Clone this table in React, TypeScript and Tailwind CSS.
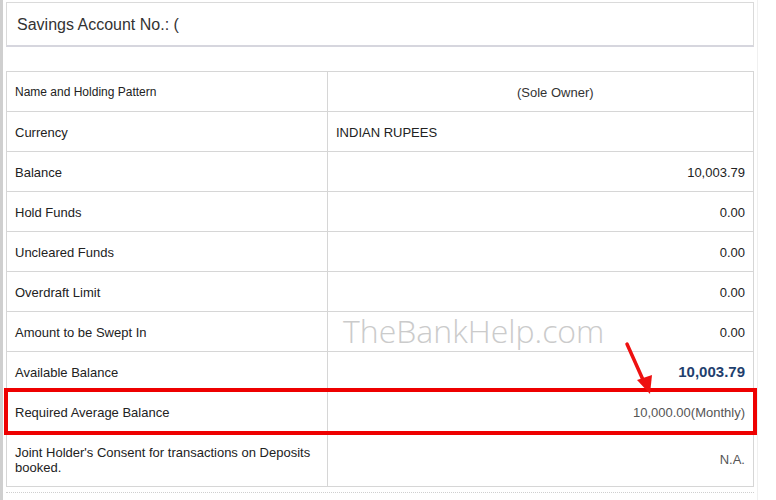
import React from 'react';

type Row = {
  label: string;
  value: React.ReactNode;
  align?: 'left' | 'right';
  small?: boolean;
  tall?: boolean;
};

const rows: Row[] = [
  {
    label: 'Name and Holding Pattern',
    small: true,
    align: 'left',
    value: <span className="pl-[181px] text-[13px] text-[#333]">(Sole Owner)</span>,
  },
  { label: 'Currency', align: 'left', value: <span className="text-[13px] text-[#222]">INDIAN RUPEES</span> },
  { label: 'Balance', value: <span className="text-[13px] text-[#222]">10,003.79</span> },
  { label: 'Hold Funds', value: <span className="text-[13px] text-[#222]">0.00</span> },
  { label: 'Uncleared Funds', value: <span className="text-[13px] text-[#222]">0.00</span> },
  { label: 'Overdraft Limit', value: <span className="text-[13px] text-[#222]">0.00</span> },
  { label: 'Amount to be Swept In', value: <span className="text-[13px] text-[#222]">0.00</span> },
  {
    label: 'Available Balance',
    value: <span className="text-[15px] font-bold text-[#1f3f6e]">10,003.79</span>,
  },
  {
    label: 'Required Average Balance',
    value: <span className="text-[13px] text-[#555]">10,000.00(Monthly)</span>,
  },
  {
    label: "Joint Holder's Consent for transactions on Deposits booked.",
    tall: true,
    value: <span className="text-[13px] text-[#555]">N.A.</span>,
  },
];

export default function App() {
  return (
    <div
      className="relative flex h-[500px] w-[776px] overflow-hidden bg-white"
      style={{ fontFamily: '"Liberation Sans", Arial, sans-serif' }}
    >
      {/* left gutter bar */}
      <div className="w-[3px] shrink-0 bg-[#cfcfcf]" />

      <div className="flex w-[755px] flex-col border-r border-[#f0f0f0] pl-[3px] pr-[3px]">
        {/* header */}
        <div className="mt-[2px] flex h-[45px] w-[748px] items-center border border-[#dadada] border-b-2 border-b-[#d6d6de] pl-[10px] pt-[2px]">
          <span className="text-[16px] text-[#333]">Savings Account No.: (</span>
        </div>

        {/* details table */}
        <div className="mt-[24px] w-[748px] border border-[#d6d6d6] border-b-0">
          {rows.map((r) => (
            <div
              key={r.label}
              className={`grid grid-cols-[321px_1fr] border-b border-[#d6d6d6] ${r.tall ? 'h-[55px]' : 'h-[40px]'}`}
            >
              <div
                className={`flex items-center border-r border-[#d6d6d6] pl-[8px] pr-[8px] pt-[2px] leading-[15px] text-[#222] ${r.small ? 'text-[12px]' : 'text-[13px]'}`}
              >
                {r.label}
              </div>
              <div
                className={`flex items-center px-[8px] pt-[2px] ${r.align === 'left' ? 'justify-start' : 'justify-end'}`}
              >
                {r.value}
              </div>
            </div>
          ))}
        </div>

        <div className="mt-[5px] w-[748px] border-t border-dotted border-[#cfcfcf]" />
      </div>

      {/* highlight box */}
      <div className="absolute left-[4px] top-[388px] h-[47px] w-[753px] border-[4px] border-[#ee0000]" />

      {/* watermark */}
      <div
        className="absolute left-[343px] top-[311px] text-[32px] leading-[40px] text-[#cbcbcb]"
        style={{ fontFamily: '"Open Sans", sans-serif', fontWeight: 300 }}
      >
        TheBankHelp.com
      </div>

      {/* arrow */}
      <svg className="absolute left-0 top-0" width="776" height="500" viewBox="0 0 776 500">
        <line x1="627" y1="344" x2="644" y2="382" stroke="#ee1111" strokeWidth="3.5" strokeLinecap="round" />
        <polygon points="650,394 637,380 652,375" fill="#ee1111" />
      </svg>
    </div>
  );
}
